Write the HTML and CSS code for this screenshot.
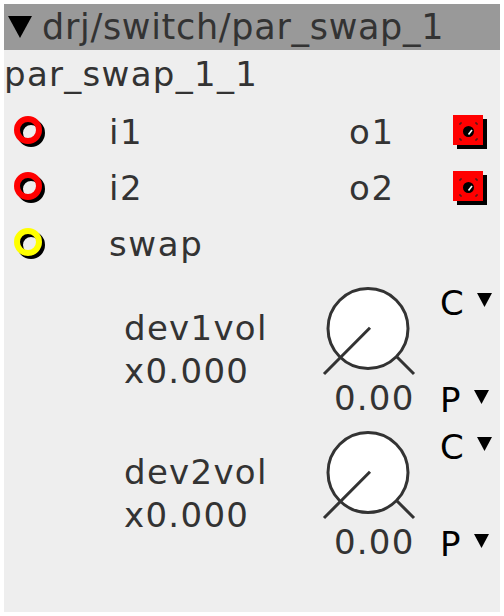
FILE: index.html
```html
<!DOCTYPE html>
<html>
<head>
<meta charset="utf-8">
<link rel="stylesheet" href="styles.css">
</head>
<body>
<div class="panel">
  <div class="header">
    <svg class="hdr-tri" width="24" height="22" viewBox="0 0 24 22"><polygon points="0,0 24,0 12,22" fill="#000"/></svg>
    <span class="hdr-text">drj/switch/par_swap_1</span>
  </div>
  <div class="title">par_swap_1_1</div>
  <div class="io">
    <div class="io-row">
      <svg class="jack" width="36" height="36" viewBox="0 0 36 36"><circle cx="19" cy="19" r="11" fill="none" stroke="#000" stroke-width="6"/><circle cx="16" cy="16" r="11" fill="none" stroke="#ff0000" stroke-width="6"/></svg>
      <span class="lbl">i1</span>
      <span class="lbl">o1</span>
      <svg class="jack" width="36" height="36" viewBox="0 0 36 36"><rect x="5" y="5" width="30" height="30" fill="#000"/><rect x="1" y="1" width="30" height="30" fill="#ff0000"/><path d="M8 11V9H10M23 9H25V11M25 24V26H23M10 26H8V24" fill="none" stroke="#222" stroke-width="1"/><circle cx="16.5" cy="17.5" r="5.5" fill="#000"/><path d="M20 16 L16.5 20.5" stroke="#fff" stroke-width="1.6"/></svg>
    </div>
    <div class="io-row">
      <svg class="jack" width="36" height="36" viewBox="0 0 36 36"><circle cx="19" cy="19" r="11" fill="none" stroke="#000" stroke-width="6"/><circle cx="16" cy="16" r="11" fill="none" stroke="#ff0000" stroke-width="6"/></svg>
      <span class="lbl">i2</span>
      <span class="lbl">o2</span>
      <svg class="jack" width="36" height="36" viewBox="0 0 36 36"><rect x="5" y="5" width="30" height="30" fill="#000"/><rect x="1" y="1" width="30" height="30" fill="#ff0000"/><path d="M8 11V9H10M23 9H25V11M25 24V26H23M10 26H8V24" fill="none" stroke="#222" stroke-width="1"/><circle cx="16.5" cy="17.5" r="5.5" fill="#000"/><path d="M20 16 L16.5 20.5" stroke="#fff" stroke-width="1.6"/></svg>
    </div>
    <div class="io-row">
      <svg class="jack" width="36" height="36" viewBox="0 0 36 36"><circle cx="19" cy="19" r="11" fill="none" stroke="#000" stroke-width="6"/><circle cx="16" cy="16" r="11" fill="none" stroke="#ffff00" stroke-width="6"/></svg>
      <span class="lbl">swap</span>
      <span></span>
      <span></span>
    </div>
  </div>
  <div class="param">
    <div class="plabel">dev1vol<br>x0.000</div>
    <div class="knob-col">
      <svg class="knob" width="100" height="100" viewBox="0 0 100 100"><circle cx="50" cy="52.5" r="40" fill="#fff" stroke="#333" stroke-width="3"/><path d="M52 51.7 L6 98 M79 81 L96 98" stroke="#333" stroke-width="3"/></svg>
      <div class="pval">0.00</div>
    </div>
    <div class="cp">
      <div class="c-row">C<svg class="dd" width="15" height="14" viewBox="0 0 15 14"><polygon points="0,0 15,0 7.5,14" fill="#000"/></svg></div>
      <div class="p-row">P<svg class="dd" width="15" height="14" viewBox="0 0 15 14"><polygon points="0,0 15,0 7.5,14" fill="#000"/></svg></div>
    </div>
  </div>
  <div class="param">
    <div class="plabel">dev2vol<br>x0.000</div>
    <div class="knob-col">
      <svg class="knob" width="100" height="100" viewBox="0 0 100 100"><circle cx="50" cy="52.5" r="40" fill="#fff" stroke="#333" stroke-width="3"/><path d="M52 51.7 L6 98 M79 81 L96 98" stroke="#333" stroke-width="3"/></svg>
      <div class="pval">0.00</div>
    </div>
    <div class="cp">
      <div class="c-row">C<svg class="dd" width="15" height="14" viewBox="0 0 15 14"><polygon points="0,0 15,0 7.5,14" fill="#000"/></svg></div>
      <div class="p-row">P<svg class="dd" width="15" height="14" viewBox="0 0 15 14"><polygon points="0,0 15,0 7.5,14" fill="#000"/></svg></div>
    </div>
  </div>
</div>
</body>
</html>
```

FILE: styles.css
```css
body {
  margin: 0;
  background: #fff;
  font-family: "DejaVu Sans", sans-serif;
}

.panel {
  margin: 4px;
  width: 496px;
  height: 608px;
  background: #eeeeee;
  color: #333;
  overflow: hidden;
}

.header {
  height: 46px;
  background: #999999;
  display: flex;
  align-items: center;
  gap: 10px;
  padding-left: 4px;
  font-size: 35px;
  line-height: 46px;
  letter-spacing: 0.7px;
  white-space: nowrap;
}

.hdr-tri {
  display: block;
  flex: none;
}

.title {
  font-size: 34px;
  line-height: 40px;
  letter-spacing: 1.3px;
  padding-top: 4px;
  height: 40px;
}

.io {
  margin-top: 10px;
  margin-bottom: 2px;
}

.io-row {
  display: grid;
  grid-template-columns: 97px 240px 103px 36px;
  padding-left: 8px;
  height: 56px;
  align-items: center;
  font-size: 34px;
  line-height: 56px;
  letter-spacing: 1.6px;
}

.jack {
  display: block;
}

.param {
  display: grid;
  grid-template-columns: 194px 122px auto;
  height: 144px;
  padding-left: 120px;
}

.plabel {
  padding-top: 33px;
  font-size: 34px;
  line-height: 43px;
  letter-spacing: 1.3px;
}

.knob {
  display: block;
  margin-top: 2px;
}

.pval {
  margin-top: 2px;
  padding-left: 16px;
  font-size: 34px;
  line-height: 40px;
  letter-spacing: 1.2px;
}

.cp {
  color: #000;
  font-size: 34px;
  line-height: 40px;
}

.c-row {
  margin-top: 9px;
}

.p-row {
  margin-top: 57px;
}

.dd {
  margin-left: 13px;
  vertical-align: 8px;
}
```
